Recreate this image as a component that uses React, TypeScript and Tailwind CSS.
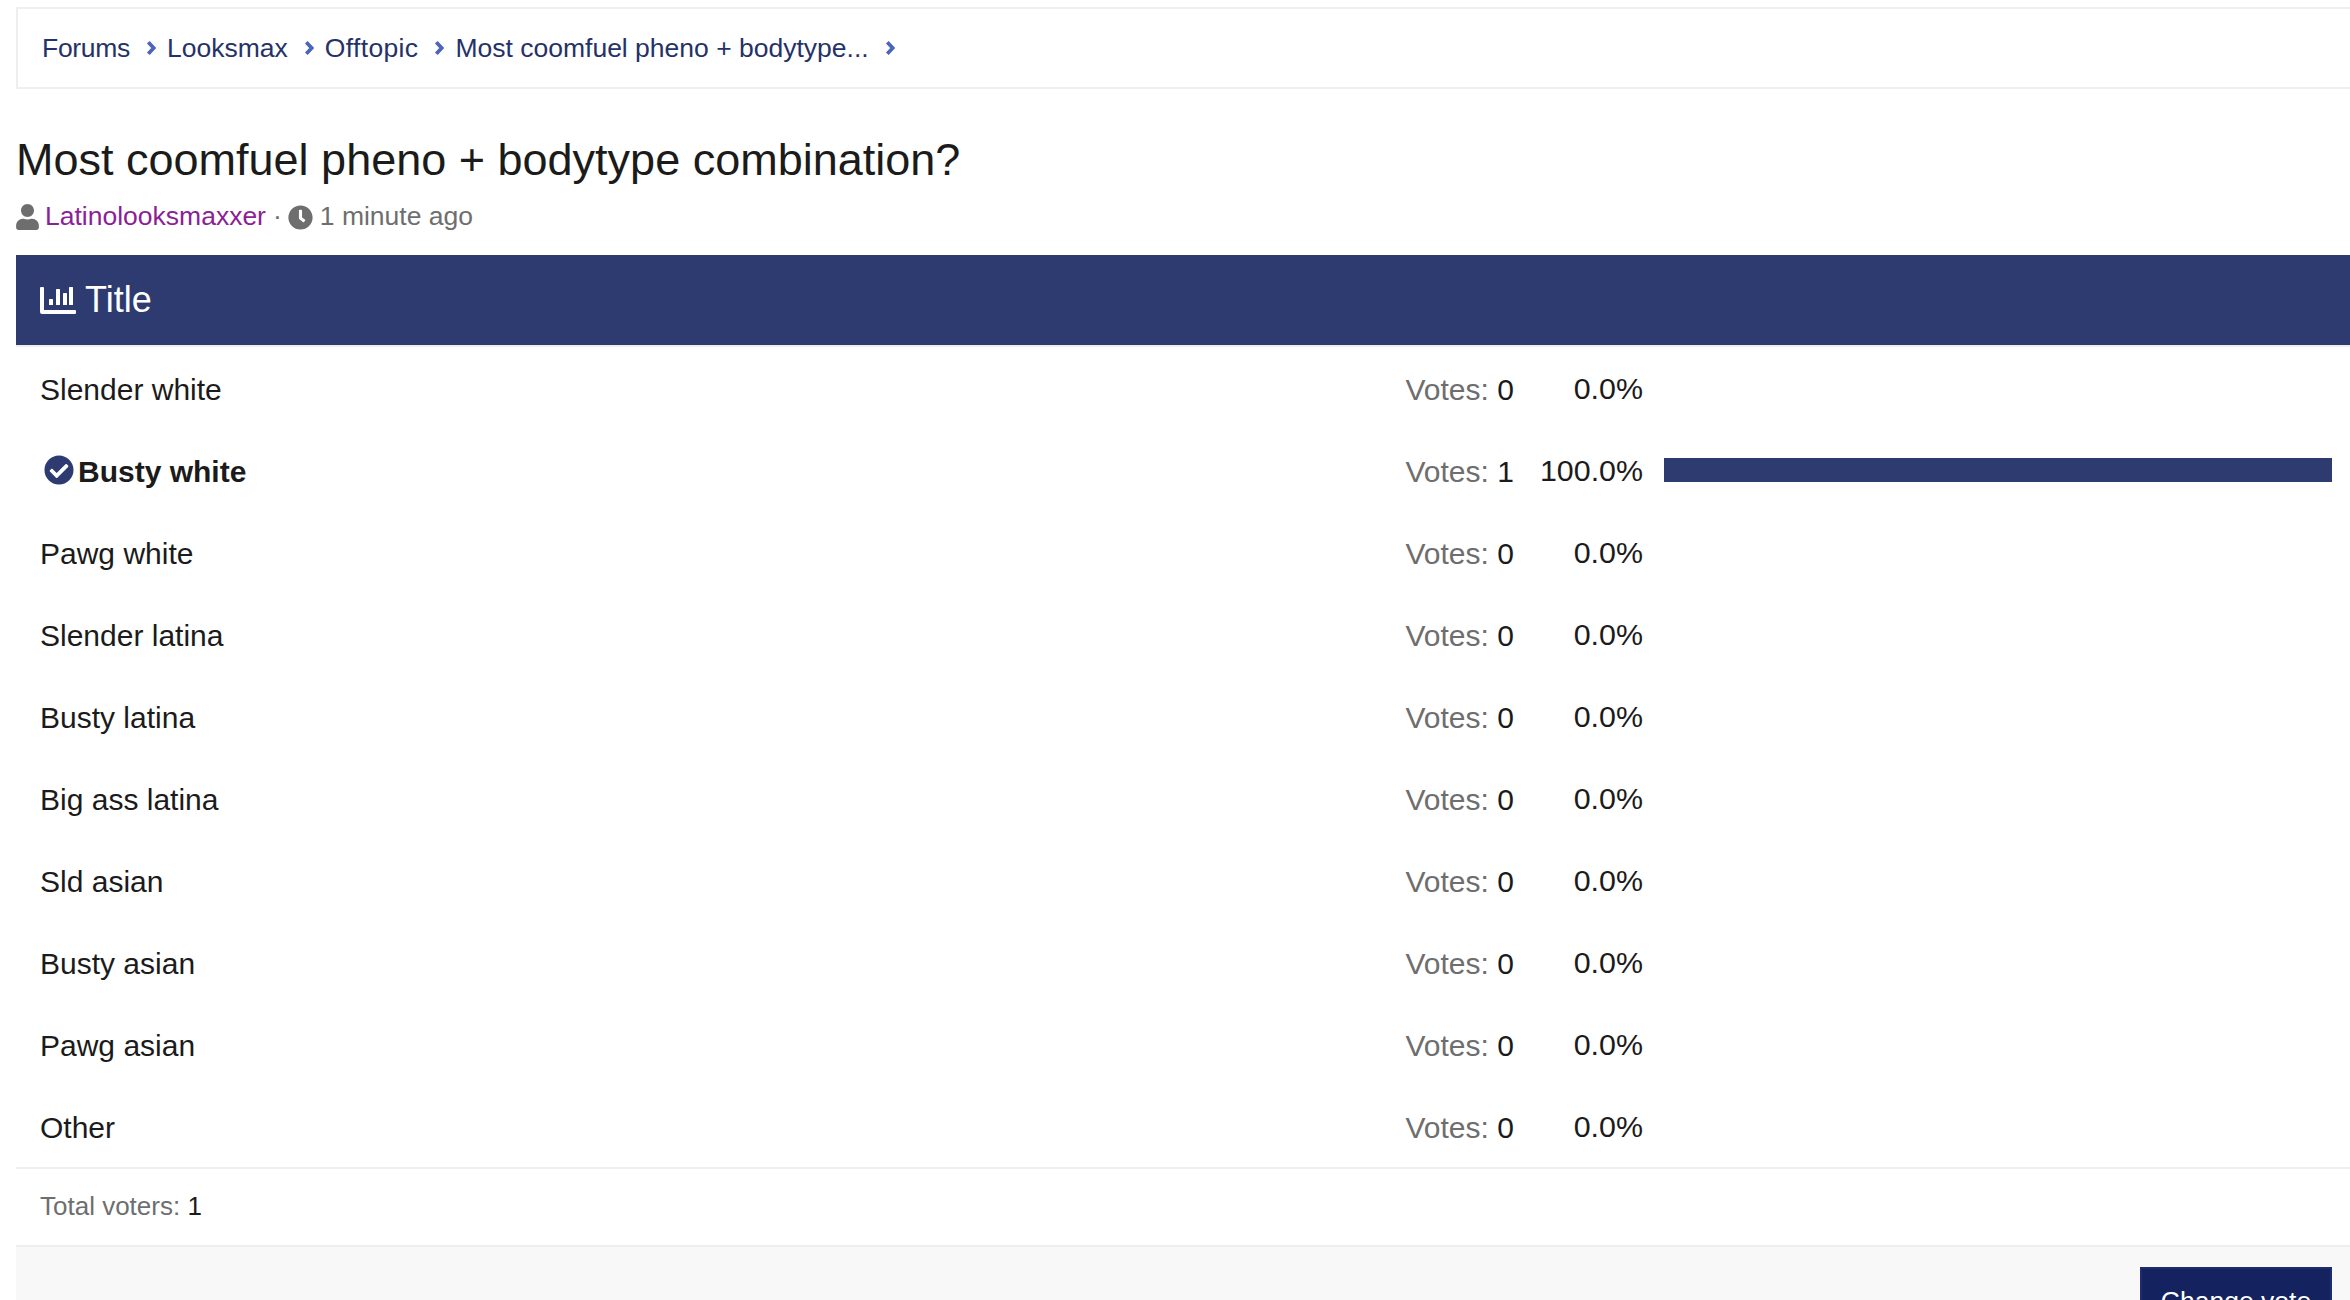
import React from 'react';
import { FaUser, FaClock, FaCheckCircle } from 'react-icons/fa';

const rows = [
  { name: 'Slender white', votes: 0, pct: '0.0%' },
  { name: 'Busty white', votes: 1, pct: '100.0%', chosen: true },
  { name: 'Pawg white', votes: 0, pct: '0.0%' },
  { name: 'Slender latina', votes: 0, pct: '0.0%' },
  { name: 'Busty latina', votes: 0, pct: '0.0%' },
  { name: 'Big ass latina', votes: 0, pct: '0.0%' },
  { name: 'Sld asian', votes: 0, pct: '0.0%' },
  { name: 'Busty asian', votes: 0, pct: '0.0%' },
  { name: 'Pawg asian', votes: 0, pct: '0.0%' },
  { name: 'Other', votes: 0, pct: '0.0%' },
];

const crumbs = [
  { label: 'Forums', cls: 'tracking-[-0.3px]' },
  { label: 'Looksmax', cls: '' },
  { label: 'Offtopic', cls: 'tracking-[0.35px]' },
  { label: 'Most coomfuel pheno + bodytype...', cls: '' },
];

const ChartIcon = () => (
  <svg viewBox="0 0 36 27" className="h-[27px] w-[36px]" fill="#fff">
    <path d="M0 1a1 1 0 0 1 1-1h2a1 1 0 0 1 1 1v22h31a1 1 0 0 1 1 1v2a1 1 0 0 1-1 1H2a2 2 0 0 1-2-2z" />
    <rect x="9" y="12" width="4" height="6" rx="0.5" />
    <rect x="16" y="2" width="4" height="16" rx="0.5" />
    <rect x="23" y="6" width="4" height="12" rx="0.5" />
    <rect x="29" y="0" width="4" height="18" rx="0.5" />
  </svg>
);

const Chevron = () => (
  <svg viewBox="0 0 9 14" className="mr-[11px] ml-[16px] h-[14px] w-[10px] shrink-0" fill="none" stroke="#4a64c0" strokeWidth="3.6">
    <path d="M1.8 1.2 7.2 7l-5.4 5.8" />
  </svg>
);

export default function App() {
  return (
    <div className="h-[1300px] overflow-hidden bg-white pt-[7px] pl-4 font-['Liberation_Sans',Arial,sans-serif] text-[#1b1b1b]">
      {/* breadcrumb */}
      <div className="flex h-[82px] items-center border-y-2 border-l-2 border-[#eeeeee] pl-[24px] text-[26.5px] text-[#253268]">
        {crumbs.map(c => (
          <React.Fragment key={c.label}>
            <span className={`pt-[2px] ${c.cls}`}>{c.label}</span>
            <Chevron />
          </React.Fragment>
        ))}
      </div>

      {/* title */}
      <h1 className="mt-[44px] text-[45px] leading-[54px] font-normal">Most coomfuel pheno + bodytype combination?</h1>
      <div className="mt-[15px] flex h-[30px] items-center text-[26.5px] text-[#6e6e6e]">
        <FaUser className="mr-[6px] h-[26px] w-[23px]" />
        <span className="text-[#8a1f96]">Latinolooksmaxxer</span>
        <span className="mr-[6px] ml-[7px]">·</span>
        <FaClock className="mr-[7px] h-[25px] w-[25px]" />
        <span>1 minute ago</span>
      </div>

      {/* poll */}
      <div className="mt-[23px] flex h-[90px] items-center gap-[9px] bg-[#2d3b70] pl-[24px] text-[36px] text-white">
        <ChartIcon />
        <span>Title</span>
      </div>
      <div className="h-[2px] bg-[#eeeeee]" />
      <div>
        {rows.map(r => (
          <div key={r.name} className="flex h-[82px] items-center pr-[18px] pl-[24px] text-[30px]">
            <div className={r.chosen ? 'flex flex-1 items-center font-bold' : 'flex-1 pt-[2px]'}>
              {r.chosen && <FaCheckCircle className="mr-[4px] ml-[4px] h-[30px] w-[30px] text-[#2d3b70]" />}
              {r.chosen ? <span className="pt-[2px]">{r.name}</span> : r.name}
            </div>
            <div className="w-[110px] whitespace-nowrap pt-[2px] text-[#6e6e6e]">
              Votes: <span className="text-[#1b1b1b]">{r.votes}</span>
            </div>
            <div className="w-[128.5px] pt-[2px] pr-[1px] text-right text-[30.4px]">{r.pct}</div>
            <div className="ml-[20px] w-[668px]">
              {r.chosen && <div className="h-[24px] w-full bg-[#2d3b70]" />}
            </div>
          </div>
        ))}
      </div>
      <div className="flex h-[78px] items-center border-t-2 border-[#eeeeee] pb-[2px] pl-[24px] text-[26px] text-[#6e6e6e]">
        Total voters:&nbsp;<span className="text-[#1b1b1b]">1</span>
      </div>
      <div className="flex justify-end border-t-2 border-[#eeeeee] bg-[#f8f8f8] pt-[20px] pr-[18px] pb-[20px]">
        <button className="h-[70px] w-[192px] border-2 border-[#1e2d6e] bg-[#152260] text-[26.5px] text-white">Change vote</button>
      </div>
    </div>
  );
}
